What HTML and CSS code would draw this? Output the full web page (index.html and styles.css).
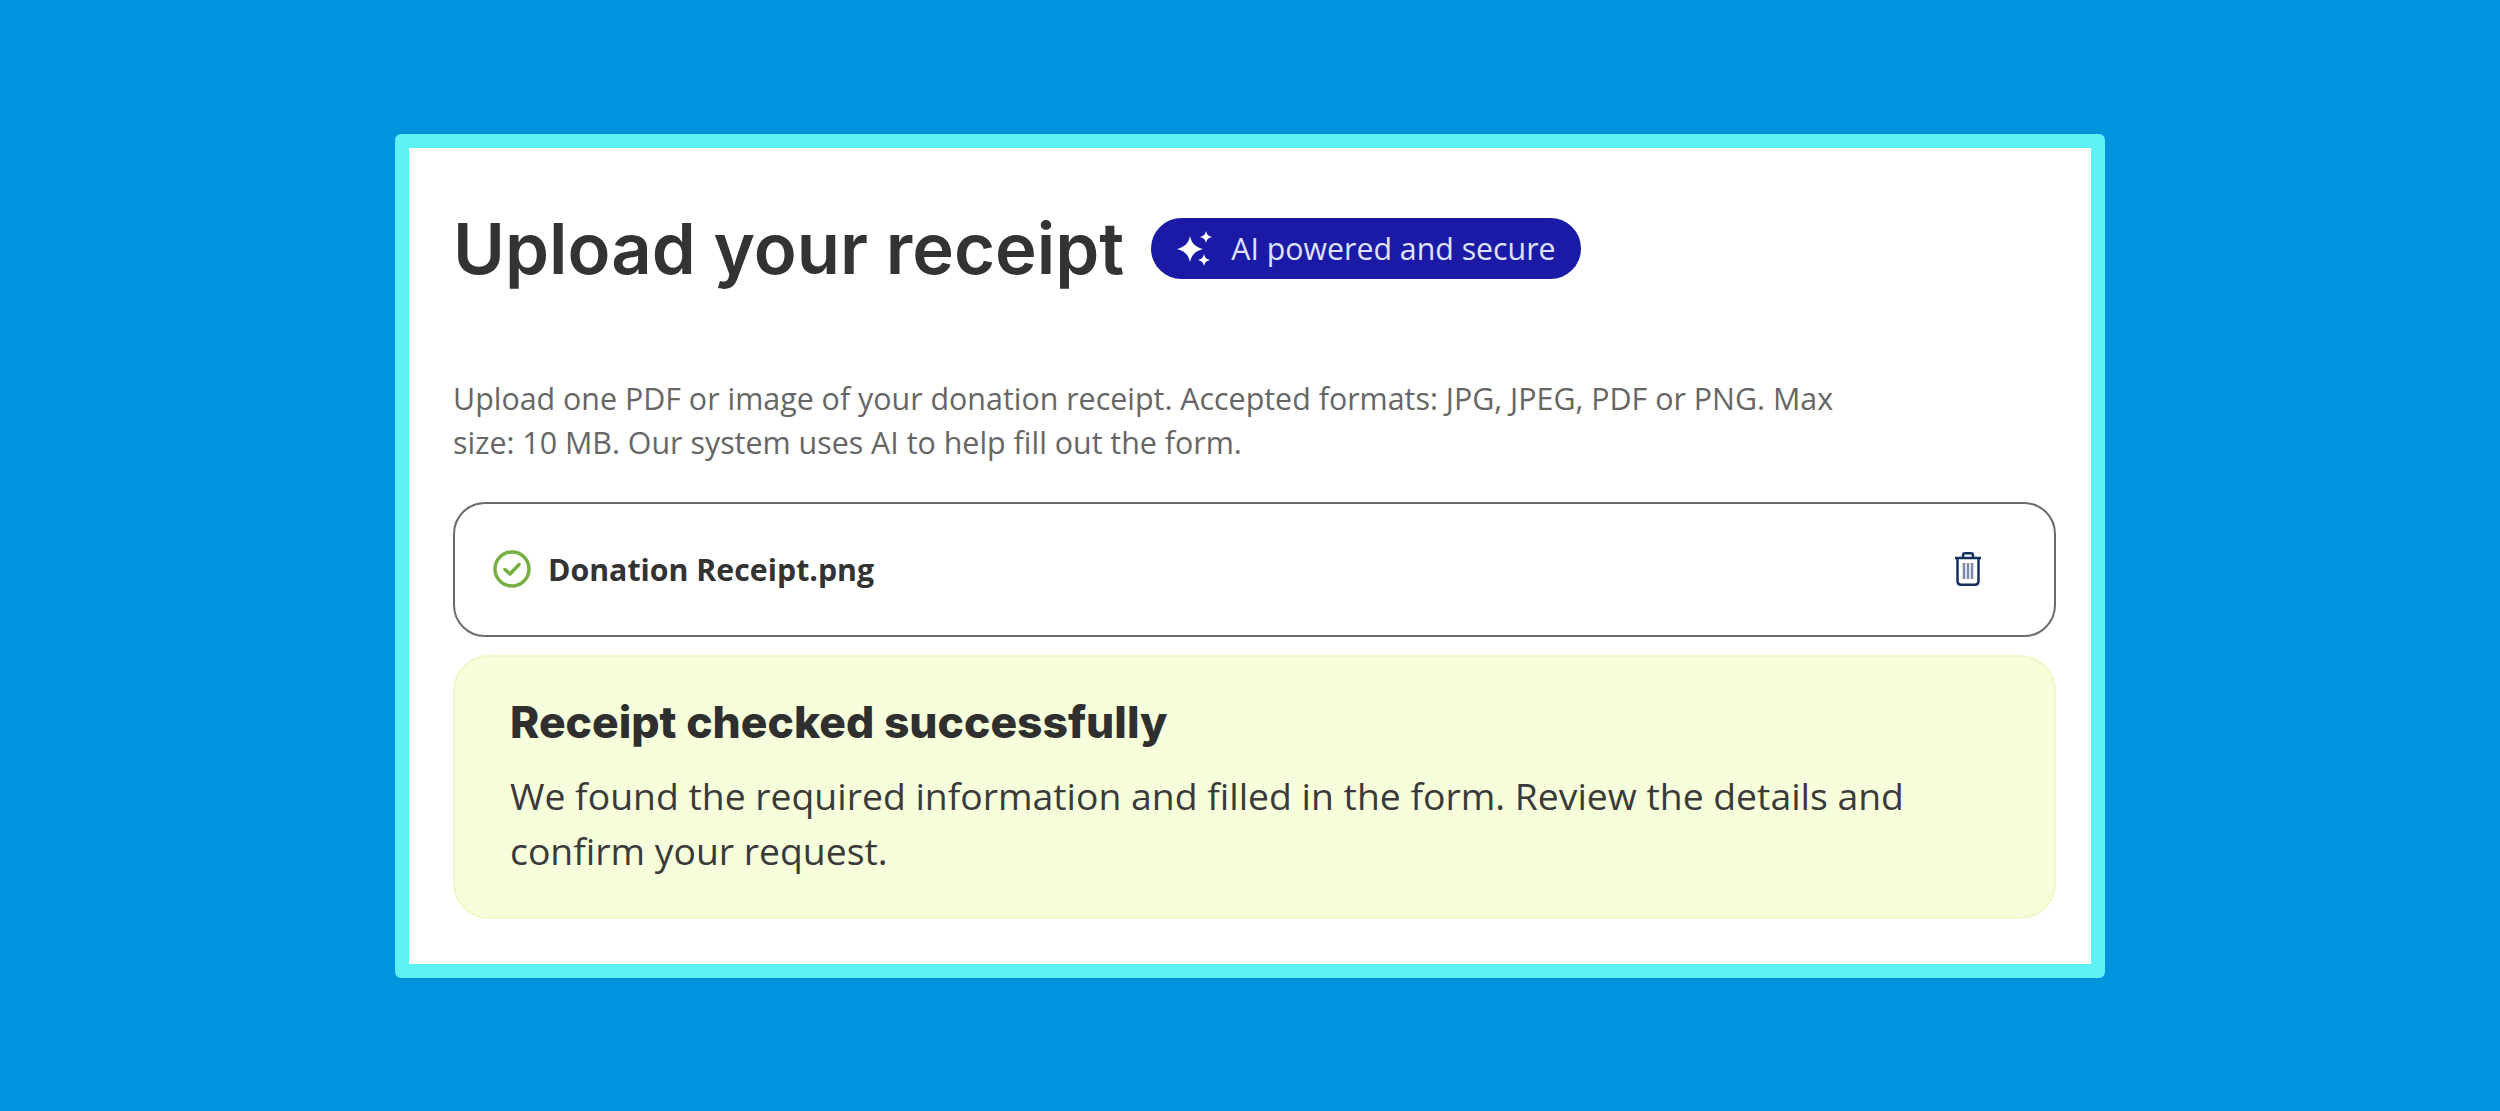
FILE: index.html
```html
<!DOCTYPE html>
<html lang="en">
<head>
    <meta charset="UTF-8">
    <title>Upload your receipt</title>
    <link rel="stylesheet" href="styles.css">
</head>
<body>
    <div class="container">
        <div class="title-row">
            <h1>Upload your receipt</h1>
            <span class="badge">
                <svg class="badge-icon" viewBox="0 0 38 38" width="38" height="38">
                    <path fill="#fff" d="M14 6 C15.500 13 19 17 27 19 C19 21 15.500 25 14 32 C12.500 25 9 21 1 19 C9 17 12.500 13 14 6Z"/>
                    <path fill="#fff" d="M30 1 C31 5 32.500 6 36 7 C32.500 8 31 9 30 13 C29 9 27.500 8 24 7 C27.500 6 29 5 30 1Z"/>
                    <path fill="#fff" d="M28 24 C29 28 30.500 29 34 30 C30.500 31 29 32 28 36 C27 32 25.500 31 22 30 C25.500 29 27 28 28 24Z"/>
                </svg>
                AI powered and secure
            </span>
        </div>

        <p class="intro">Upload one PDF or image of your donation receipt. Accepted formats: JPG, JPEG, PDF or PNG. Max size: 10 MB. Our system uses AI to help fill out the form.</p>

        <div class="file-row">
            <div class="file-name">
                <svg viewBox="0 0 38 38" width="38" height="38" fill="none" stroke="#76b043" stroke-width="3.5">
                    <circle cx="19" cy="19" r="17"/>
                    <path d="M12 19.5 L17 24 L26 14.5" stroke-linecap="round" stroke-linejoin="round"/>
                </svg>
                <strong>Donation Receipt.png</strong>
            </div>
            <svg class="trash" viewBox="0 0 28 34" width="28" height="34" fill="none" stroke="#14305e" stroke-width="2.5">
                <path d="M1 6 H27"/>
                <path d="M9 6 V3.5 C9 2 10 1.3 11 1.3 H17 C18 1.3 19 2 19 3.5 V6"/>
                <path d="M3.5 6 V29 C3.500 31.5 5 32.7 7 32.7 H21 C23 32.7 24.5 31.5 24.5 29 V6"/>
                <path d="M10 11 V27 M14 11 V27 M18 11 V27" stroke="#7c88a8" stroke-width="2.500"/>
            </svg>
        </div>

        <div class="success">
            <h2>Receipt checked successfully</h2>
            <p>We found the required information and filled in the form. Review the details and confirm your request.</p>
        </div>
    </div>
</body>
</html>
```

FILE: styles.css
```css
body {
    margin: 0;
    min-height: 100vh;
    background: #0094de;
    display: flex;
    align-items: center;
    justify-content: center;
    font-family: "Open Sans", "Noto Sans", sans-serif;
}
.container {
    box-sizing: border-box;
    width: 1710px;
    height: 844px;
    background: white;
    border: 14px solid #5ff2f5;
    border-radius: 6px;
    padding: 56px 35px 0 44px;
}
.title-row {
    display: flex;
    align-items: center;
    gap: 27px;
    height: 90px;
}
h1 {
    margin: 0;
    font-family: Inter, sans-serif;
    font-size: 70.6px;
    font-weight: 600;
    color: #333;
}
.badge {
    display: flex;
    align-items: center;
    gap: 17px;
    height: 61px;
    box-sizing: border-box;
    padding: 0 25px;
    border-radius: 31px;
    background: #1a1aa6;
    color: #dfe1ff;
    font-size: 30.3px;
}
.intro {
    margin: 83px 0 0;
    max-width: 1400px;
    font-size: 30.4px;
    line-height: 44px;
    color: #666;
}
.file-row {
    box-sizing: border-box;
    display: flex;
    align-items: center;
    justify-content: space-between;
    height: 135px;
    margin-top: 37px;
    padding: 0 72px 0 38px;
    border: 2px solid #6b6b6b;
    border-radius: 32px;
}
.file-name {
    display: flex;
    align-items: center;
    gap: 17px;
}
.file-name strong {
    font-size: 30.3px;
    font-weight: 700;
    color: #333;
}
.success {
    box-sizing: border-box;
    height: 264px;
    margin-top: 18px;
    padding: 38px 55px;
    background: #f6fedb;
    border: 2px solid #eef8c8;
    border-radius: 36px;
}
.success h2 {
    margin: 0;
    font-family: Inter, sans-serif;
    font-size: 44.4px;
    font-weight: 800;
    color: #2f2f2f;
}
.success p {
    margin: 19px 0 0;
    font-size: 37.35px;
    line-height: 55px;
    color: #3a3a3a;
}
```
